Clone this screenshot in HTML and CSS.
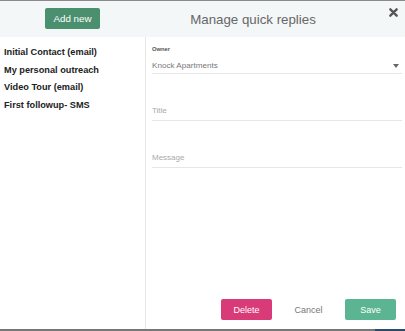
FILE: index.html
```html
<!DOCTYPE html>
<html lang="en">
<head>
    <meta charset="UTF-8">
    <meta name="viewport" content="width=device-width, initial-scale=1.0">
    <title>Manage quick replies</title>
    <link rel="stylesheet" href="styles.css">
</head>
<body>
    <div class="modal">
        <header class="modal-head">
            <div class="head-left">
                <button class="add-btn" type="button">Add new</button>
            </div>
            <h2 class="modal-title">Manage quick replies</h2>
            <button class="close-btn" type="button" aria-label="Close">
                <svg width="9" height="9" viewBox="0 0 10 10">
                    <path d="M1.5 1.5 L8.5 8.5 M8.5 1.5 L1.5 8.5" stroke="#555" stroke-width="2.6" stroke-linecap="round"/>
                </svg>
            </button>
        </header>

        <div class="modal-body">
            <ul class="reply-list">
                <li>Initial Contact (email)</li>
                <li>My personal outreach</li>
                <li>Video Tour (email)</li>
                <li>First followup- SMS</li>
            </ul>

            <section class="editor">
                <div class="field owner">
                    <label class="field-label">Owner</label>
                    <div class="select">
                        <span>Knock Apartments</span>
                        <span class="caret"></span>
                    </div>
                </div>
                <div class="field">
                    <input class="text-input" type="text" placeholder="Title">
                </div>
                <div class="field">
                    <input class="text-input" type="text" placeholder="Message">
                </div>

                <div class="actions">
                    <button class="btn delete" type="button">Delete</button>
                    <button class="btn cancel" type="button">Cancel</button>
                    <button class="btn save" type="button">Save</button>
                </div>
            </section>
        </div>
        <div class="bottom-bar"><span class="bar-accent"></span></div>
    </div>
</body>
</html>
```

FILE: styles.css
```css
:root {
--hijau: #4a8f6e;
--mint: #5bb592;
--pink: #d83b78;
--abu: #e6e6e6;
--latar: #f4f7f8;
}

*,
*::before,
*::after {
box-sizing: border-box;
}

body {
font-family: "Liberation Sans", Arial, sans-serif;
margin: 0;
height: 100vh;
overflow: hidden;
background: #ffffff;
}

.modal {
display: flex;
flex-direction: column;
height: 100vh;
border-top: 1px solid #8a8a8a;
}

.modal-head {
display: flex;
align-items: center;
height: 36px;
background-color: var(--latar);
position: relative;
}

.head-left {
width: 145px;
height: 100%;
display: flex;
justify-content: center;
align-items: flex-start;
padding-top: 7px;
}

.add-btn {
width: 55px;
height: 21px;
border: none;
border-radius: 2px;
background-color: var(--hijau);
color: #fff;
font-family: inherit;
font-size: 9.8px;
cursor: pointer;
}

.modal-title {
flex: 1;
margin: 0;
padding-right: 44px;
text-align: center;
font-size: 13.3px;
font-weight: normal;
color: #666;
}

.close-btn {
position: absolute;
top: 7px;
right: 7px;
border: none;
background: none;
padding: 0;
line-height: 0;
cursor: pointer;
}

.modal-body {
flex: 1;
display: grid;
grid-template-columns: 146px 1fr;
}

.reply-list {
list-style: none;
margin: 0;
padding: 7px 0 0 4px;
border-right: 1px solid var(--abu);
}

.reply-list li {
font-size: 9.2px;
font-weight: bold;
color: #222;
height: 17.5px;
line-height: 17.5px;
}

.editor {
display: flex;
flex-direction: column;
padding: 8px 3px 9px 6px;
}

.field {
border-bottom: 1px solid var(--abu);
}

.owner {
display: flex;
flex-direction: column;
}

.field-label {
font-size: 5.8px;
font-weight: bold;
color: #555;
height: 9px;
line-height: 9px;
}

.select {
display: flex;
justify-content: space-between;
align-items: center;
height: 19px;
padding-top: 4px;
font-size: 8.1px;
color: #777;
}

.caret {
width: 0;
height: 0;
margin-right: 3px;
border-left: 3px solid transparent;
border-right: 3px solid transparent;
border-top: 4px solid #666;
}

.field + .field {
margin-top: 26px;
}

.text-input {
display: block;
width: 100%;
height: 20px;
border: none;
outline: none;
padding: 0;
font-family: inherit;
font-size: 8px;
color: #777;
background: transparent;
}

.text-input::placeholder {
color: #aaa;
}

.actions {
margin-top: auto;
display: flex;
justify-content: flex-end;
gap: 11px;
padding-right: 6px;
}

.btn {
width: 51px;
height: 21px;
border: none;
border-radius: 2px;
font-family: inherit;
font-size: 9px;
color: #fff;
cursor: pointer;
}

.delete {
background-color: var(--pink);
}

.cancel {
background: transparent;
color: #777;
}

.save {
background-color: var(--mint);
}

.bottom-bar {
height: 2px;
background-color: #777;
display: flex;
justify-content: flex-end;
}

.bar-accent {
width: 30px;
background-color: #2d4a6b;
}
```
